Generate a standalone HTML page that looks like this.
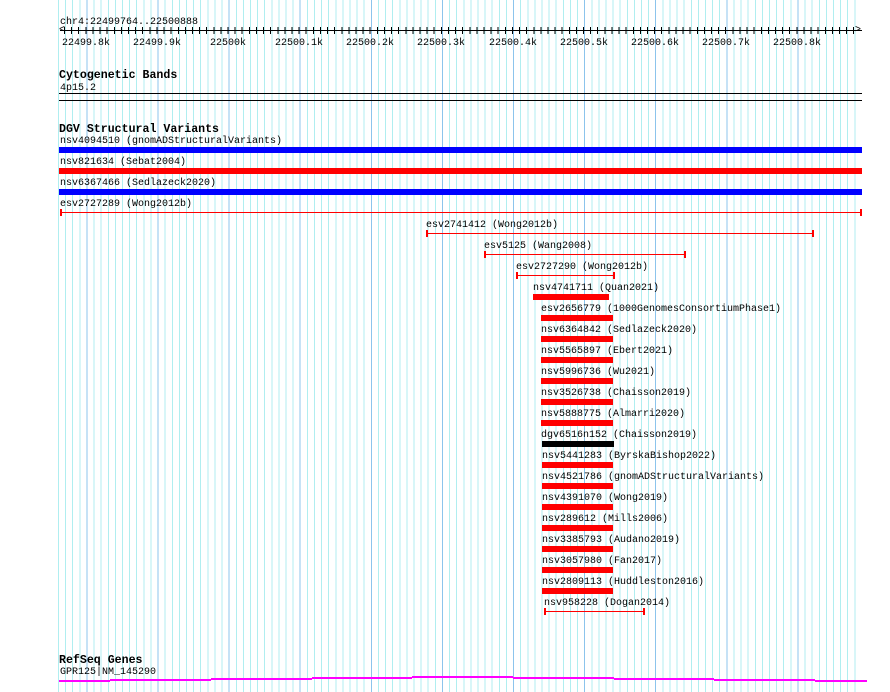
<!DOCTYPE html>
<html><head><meta charset="utf-8"><style>
body{margin:0;width:890px;height:692px;background:#fff;position:relative;overflow:hidden;font-family:"Liberation Mono","DejaVu Sans Mono",monospace;font-size:10px;color:#000}
.g1{position:absolute;left:57.5px;top:0;width:800px;height:692px;background:repeating-linear-gradient(to right,#b0eef0 0 1px,transparent 1px 7.11px)}
.g2{position:absolute;left:57.5px;top:0;width:800px;height:692px;background:repeating-linear-gradient(to right,transparent 0 28.44px,#8cc4ec 28.44px 29.44px,transparent 29.44px 71.1px)}
.t{position:absolute;white-space:pre;line-height:10px;transform:translateY(3px)}
.h{font-weight:bold;font-size:11.6px;line-height:11px;transform:translateY(2px)}
.b{position:absolute;height:6px}
.l{position:absolute;height:1px;background:#f00}
.c{position:absolute;width:2px;height:7px;background:#f00}
.m{position:absolute;height:2px;background:#f0f}
</style></head><body>
<div class="g1"></div><div class="g2"></div>
<div class="t" style="left:60px;top:15px">chr4:22499764..22500888</div>
<div style="position:absolute;left:60px;top:30px;width:802px;height:1px;background:#000"></div>
<div style="position:absolute;left:64px;top:27px;width:796px;height:7px;background:repeating-linear-gradient(to right,#000 0 1px,transparent 1px 7.11px)"></div>
<div class="t" style="left:59px;top:23px">&lt;</div>
<div class="t" style="left:855px;top:23px">&gt;</div>
<div class="t" style="left:62px;top:36px">22499.8k</div>
<div class="t" style="left:133px;top:36px">22499.9k</div>
<div class="t" style="left:210px;top:36px">22500k</div>
<div class="t" style="left:275px;top:36px">22500.1k</div>
<div class="t" style="left:346px;top:36px">22500.2k</div>
<div class="t" style="left:417px;top:36px">22500.3k</div>
<div class="t" style="left:489px;top:36px">22500.4k</div>
<div class="t" style="left:560px;top:36px">22500.5k</div>
<div class="t" style="left:631px;top:36px">22500.6k</div>
<div class="t" style="left:702px;top:36px">22500.7k</div>
<div class="t" style="left:773px;top:36px">22500.8k</div>
<div class="t h" style="left:59px;top:68px">Cytogenetic Bands</div>
<div class="t" style="left:60px;top:81px">4p15.2</div>
<div style="position:absolute;left:59px;top:93px;width:803px;height:1px;background:#000"></div>
<div style="position:absolute;left:59px;top:100px;width:803px;height:1px;background:#000"></div>
<div class="t h" style="left:59px;top:122px">DGV Structural Variants</div>

<div class="t" style="left:60px;top:134px">nsv4094510 (gnomADStructuralVariants)</div>
<div class="b" style="left:59px;top:147px;width:803px;background:#00f"></div>
<div class="t" style="left:60px;top:155px">nsv821634 (Sebat2004)</div>
<div class="b" style="left:59px;top:168px;width:803px;background:#f00"></div>
<div class="t" style="left:60px;top:176px">nsv6367466 (Sedlazeck2020)</div>
<div class="b" style="left:59px;top:189px;width:803px;background:#00f"></div>
<div class="t" style="left:60px;top:197px">esv2727289 (Wong2012b)</div>
<div class="l" style="left:60px;top:212px;width:802px"></div><div class="c" style="left:60px;top:209px"></div><div class="c" style="left:860px;top:209px"></div>
<div class="t" style="left:426px;top:218px">esv2741412 (Wong2012b)</div>
<div class="l" style="left:426px;top:233px;width:388px"></div><div class="c" style="left:426px;top:230px"></div><div class="c" style="left:812px;top:230px"></div>
<div class="t" style="left:484px;top:239px">esv5125 (Wang2008)</div>
<div class="l" style="left:485px;top:254px;width:200px"></div><div class="c" style="left:484px;top:251px"></div><div class="c" style="left:684px;top:251px"></div>
<div class="t" style="left:516px;top:260px">esv2727290 (Wong2012b)</div>
<div class="l" style="left:517px;top:275px;width:97px"></div><div class="c" style="left:516px;top:272px"></div><div class="c" style="left:613px;top:272px"></div>
<div class="t" style="left:533px;top:281px">nsv4741711 (Quan2021)</div>
<div class="b" style="left:533px;top:294px;width:76px;background:#f00"></div>

<div class="t" style="left:541px;top:302px">esv2656779 (1000GenomesConsortiumPhase1)</div><div class="b" style="left:541px;top:315px;width:72px;background:#f00"></div>
<div class="t" style="left:541px;top:323px">nsv6364842 (Sedlazeck2020)</div><div class="b" style="left:541px;top:336px;width:72px;background:#f00"></div>
<div class="t" style="left:541px;top:344px">nsv5565897 (Ebert2021)</div><div class="b" style="left:541px;top:357px;width:72px;background:#f00"></div>
<div class="t" style="left:541px;top:365px">nsv5996736 (Wu2021)</div><div class="b" style="left:541px;top:378px;width:72px;background:#f00"></div>
<div class="t" style="left:541px;top:386px">nsv3526738 (Chaisson2019)</div><div class="b" style="left:541px;top:399px;width:72px;background:#f00"></div>
<div class="t" style="left:541px;top:407px">nsv5888775 (Almarri2020)</div><div class="b" style="left:541px;top:420px;width:72px;background:#f00"></div>
<div class="t" style="left:541px;top:428px">dgv6516n152 (Chaisson2019)</div><div class="b" style="left:542px;top:441px;width:72px;background:#000"></div>
<div class="t" style="left:542px;top:449px">nsv5441283 (ByrskaBishop2022)</div><div class="b" style="left:542px;top:462px;width:71px;background:#f00"></div>
<div class="t" style="left:542px;top:470px">nsv4521786 (gnomADStructuralVariants)</div><div class="b" style="left:542px;top:483px;width:71px;background:#f00"></div>
<div class="t" style="left:542px;top:491px">nsv4391070 (Wong2019)</div><div class="b" style="left:542px;top:504px;width:71px;background:#f00"></div>
<div class="t" style="left:542px;top:512px">nsv289612 (Mills2006)</div><div class="b" style="left:542px;top:525px;width:71px;background:#f00"></div>
<div class="t" style="left:542px;top:533px">nsv3385793 (Audano2019)</div><div class="b" style="left:542px;top:546px;width:71px;background:#f00"></div>
<div class="t" style="left:542px;top:554px">nsv3057980 (Fan2017)</div><div class="b" style="left:542px;top:567px;width:71px;background:#f00"></div>
<div class="t" style="left:542px;top:575px">nsv2809113 (Huddleston2016)</div><div class="b" style="left:542px;top:588px;width:71px;background:#f00"></div>
<div class="t" style="left:544px;top:596px">nsv958228 (Dogan2014)</div>
<div class="l" style="left:544px;top:611px;width:100px"></div><div class="c" style="left:544px;top:608px"></div><div class="c" style="left:643px;top:608px"></div>

<div class="t h" style="left:59px;top:653px">RefSeq Genes</div>
<div class="t" style="left:60px;top:665px">GPR125|NM_145290</div>
<div class="m" style="left:59px;top:680px;width:51px"></div>
<div class="m" style="left:110px;top:679px;width:101px"></div>
<div class="m" style="left:211px;top:678px;width:101px"></div>
<div class="m" style="left:312px;top:677px;width:100px"></div>
<div class="m" style="left:412px;top:676px;width:101px"></div>
<div class="m" style="left:513px;top:677px;width:101px"></div>
<div class="m" style="left:614px;top:678px;width:100px"></div>
<div class="m" style="left:714px;top:679px;width:101px"></div>
<div class="m" style="left:815px;top:680px;width:52px"></div>
</body></html>
